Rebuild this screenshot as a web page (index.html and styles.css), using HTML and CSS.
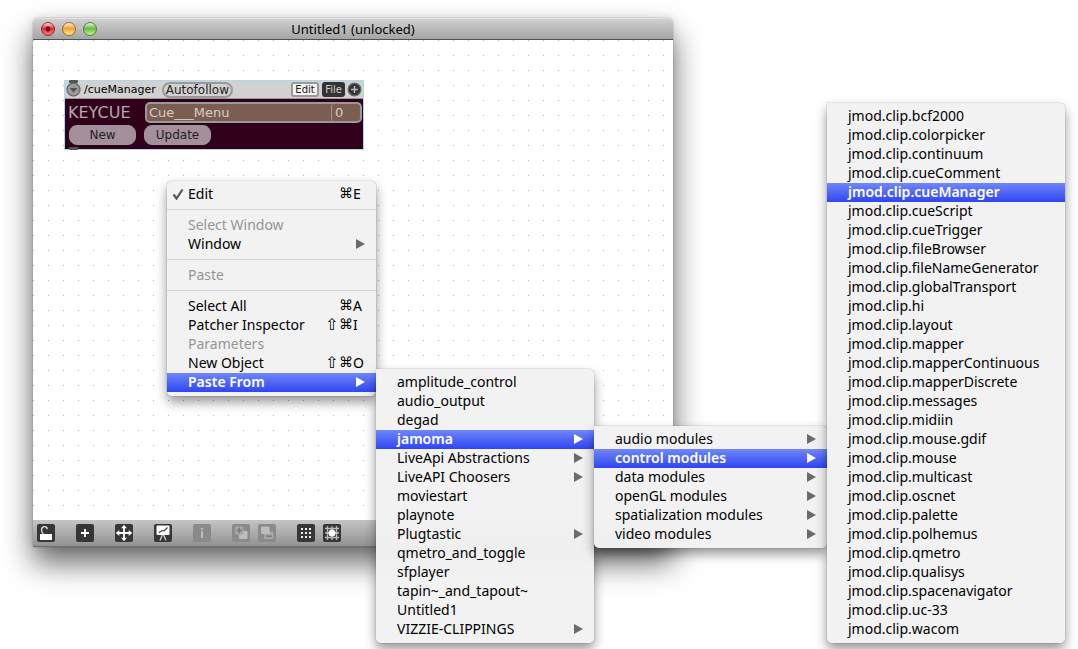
FILE: index.html
```
<!DOCTYPE html>
<html lang="en">
<head>
<meta charset="utf-8">
<title>Untitled1 (unlocked)</title>
<link rel="stylesheet" href="styles.css">
</head>
<body>
<main class="window">
  <header class="titlebar">
    <div class="lights">
      <button class="light red" aria-label="Close"></button>
      <button class="light amber" aria-label="Minimize"></button>
      <button class="light green" aria-label="Zoom"></button>
    </div>
    <h1 class="title">Untitled1 (unlocked)</h1>
  </header>

  <section class="canvas" aria-label="Patcher">
    <div class="module">
      <span class="port top"></span>
      <div class="module-head">
        <button class="round" aria-label="Module menu"><svg viewBox="0 0 15 15"><circle cx="7.500" cy="7.500" r="6.500" fill="#9a9a9a" stroke="#6c6c6c" stroke-width="1.400"/><path d="M3.500 6h8l-4 4.500z" fill="#555"/></svg></button>
        <span class="module-name">/cueManager</span>
        <button class="autofollow">Autofollow</button>
        <button class="tag edit">Edit</button>
        <button class="tag file">File</button>
        <button class="round" aria-label="Add"><svg viewBox="0 0 15 15"><circle cx="7.500" cy="7.500" r="6.300" fill="#333" stroke="#6a6a6a" stroke-width="1.400"/><path d="M7.500 4v7M4 7.500h7" stroke="#b8b8b8" stroke-width="1.500"/></svg></button>
      </div>
      <div class="module-body">
        <span class="keycue">KEYCUE</span>
        <div class="cue">
          <select class="cue-menu" aria-label="Cue menu"><option>Cue___Menu</option></select>
          <input class="cue-number" aria-label="Cue number" value="0">
        </div>
        <div class="actions">
          <button class="pill">New</button>
          <button class="pill">Update</button>
        </div>
      </div>
      <span class="port bottom"></span>
    </div>
  </section>

  <footer class="toolbar">
    <div class="group"><button class="tool" aria-label="Lock"><svg viewBox="0 0 18 18"><path d="M3 10h12v6H3z" fill="#fff"/><path d="M6.500 10C3.500 7.500 4 2.700 7.500 2.700c1.700 0 2.700 1 2.700 2.500" fill="none" stroke="#e4e4e4" stroke-width="1.300"/></svg></button></div>
    <div class="group"><button class="tool" aria-label="New object"><svg viewBox="0 0 18 18"><path d="M9 5v8M5 9h8" stroke="#fff" stroke-width="1.800"/></svg></button></div>
    <div class="group"><button class="tool" aria-label="Move"><svg viewBox="0 0 18 18"><path d="M9 3v12M3 9h12" stroke="#fff" stroke-width="1.800"/><path d="M9 .8l3 3.500H6zM9 17.200l3-3.500H6zM.8 9l3.500-3v6zM17.200 9l-3.500-3v6z" fill="#fff"/></svg></button></div>
    <div class="group"><button class="tool" aria-label="Presentation"><svg viewBox="0 0 18 18"><rect x="2.500" y="1.500" width="13" height="9.500" rx="1" fill="#fff"/><path d="M5 8.500l3-2 2 .5 3.500-3.500" fill="none" stroke="#333" stroke-width="1.100"/><path d="M8.300 11L6 16.500M9.700 11l2.300 5.500" stroke="#ddd" stroke-width="1.200"/></svg></button></div>
    <div class="group"><button class="tool" aria-label="Inspector" disabled><svg viewBox="0 0 18 18"><path d="M8 4h2v2H8zM8 7h2v7H8z" fill="#bcbcbc"/></svg></button></div>
    <div class="group">
      <button class="tool" aria-label="Group" disabled><svg viewBox="0 0 18 18"><rect x="7" y="7" width="8.500" height="8" rx="1" fill="#bdbdbd"/><rect x="3" y="2.500" width="8.500" height="8" rx="1" fill="#a6a6a6"/><path d="M7.300 3.800v5.500M4.500 6.500h5.600" stroke="#777" stroke-width="1.500"/></svg></button>
      <button class="tool" aria-label="Ungroup" disabled><svg viewBox="0 0 18 18"><rect x="6" y="7.500" width="9.500" height="7.500" rx="1" fill="#a6a6a6"/><rect x="3" y="2.500" width="8.500" height="7.500" rx="1" fill="#bdbdbd"/><path d="M8 12.200h6" stroke="#777" stroke-width="1.300"/></svg></button>
    </div>
    <div class="group">
      <button class="tool" aria-label="Grid"><svg viewBox="0 0 18 18"><path d="M4 5h2M8 5h2M12 5h2M4 9h2M8 9h2M12 9h2M4 13h2M8 13h2M12 13h2" stroke="#f0f0f0" stroke-width="2"/></svg></button>
      <button class="tool" aria-label="Snap to grid"><svg viewBox="0 0 18 18"><path d="M4.500 2v14M9 2v14M13.500 2v14M2 4.500h14M2 9h14M2 13.500h14" stroke="#bbb" stroke-width="1.300"/><circle cx="9" cy="9" r="3.500" fill="#fff"/></svg></button>
    </div>
  </footer>
</main>

<ul class="menu context" role="menu">
  <li><button class="item"><svg class="check" viewBox="0 0 12 12"><path d="M1.500 6.500L4.500 10.500 10.500 1.500" fill="none" stroke="#555" stroke-width="2.200"/></svg>Edit<span class="keys"><kbd></kbd><kbd>⌘</kbd><kbd class="letter">E</kbd></span></button></li>
  <li class="rule"></li>
  <li><button class="item" disabled>Select Window</button></li>
  <li><button class="item more">Window</button></li>
  <li class="rule"></li>
  <li><button class="item" disabled>Paste</button></li>
  <li class="rule"></li>
  <li><button class="item">Select All<span class="keys"><kbd></kbd><kbd>⌘</kbd><kbd class="letter">A</kbd></span></button></li>
  <li><button class="item">Patcher Inspector<span class="keys"><kbd class="shift">⇧</kbd><kbd>⌘</kbd><kbd class="letter">I</kbd></span></button></li>
  <li><button class="item" disabled>Parameters</button></li>
  <li><button class="item">New Object<span class="keys"><kbd class="shift">⇧</kbd><kbd>⌘</kbd><kbd class="letter">O</kbd></span></button></li>
  <li><button class="item more active">Paste From</button>
    <ul class="menu sub clippings" role="menu">
      <li><button class="item">amplitude_control</button></li>
      <li><button class="item">audio_output</button></li>
      <li><button class="item">degad</button></li>
      <li><button class="item more active">jamoma</button>
        <ul class="menu sub modules" role="menu">
          <li><button class="item more">audio modules</button></li>
          <li><button class="item more active">control modules</button>
            <ul class="menu sub clips" role="menu">
              <li><button class="item">jmod.clip.bcf2000</button></li>
              <li><button class="item">jmod.clip.colorpicker</button></li>
              <li><button class="item">jmod.clip.continuum</button></li>
              <li><button class="item">jmod.clip.cueComment</button></li>
              <li><button class="item active">jmod.clip.cueManager</button></li>
              <li><button class="item">jmod.clip.cueScript</button></li>
              <li><button class="item">jmod.clip.cueTrigger</button></li>
              <li><button class="item">jmod.clip.fileBrowser</button></li>
              <li><button class="item">jmod.clip.fileNameGenerator</button></li>
              <li><button class="item">jmod.clip.globalTransport</button></li>
              <li><button class="item">jmod.clip.hi</button></li>
              <li><button class="item">jmod.clip.layout</button></li>
              <li><button class="item">jmod.clip.mapper</button></li>
              <li><button class="item">jmod.clip.mapperContinuous</button></li>
              <li><button class="item">jmod.clip.mapperDiscrete</button></li>
              <li><button class="item">jmod.clip.messages</button></li>
              <li><button class="item">jmod.clip.midiin</button></li>
              <li><button class="item">jmod.clip.mouse.gdif</button></li>
              <li><button class="item">jmod.clip.mouse</button></li>
              <li><button class="item">jmod.clip.multicast</button></li>
              <li><button class="item">jmod.clip.oscnet</button></li>
              <li><button class="item">jmod.clip.palette</button></li>
              <li><button class="item">jmod.clip.polhemus</button></li>
              <li><button class="item">jmod.clip.qmetro</button></li>
              <li><button class="item">jmod.clip.qualisys</button></li>
              <li><button class="item">jmod.clip.spacenavigator</button></li>
              <li><button class="item">jmod.clip.uc-33</button></li>
              <li><button class="item">jmod.clip.wacom</button></li>
            </ul>
          </li>
          <li><button class="item more">data modules</button></li>
          <li><button class="item more">openGL modules</button></li>
          <li><button class="item more">spatialization modules</button></li>
          <li><button class="item more">video modules</button></li>
        </ul>
      </li>
      <li><button class="item more">LiveApi Abstractions</button></li>
      <li><button class="item more">LiveAPI Choosers</button></li>
      <li><button class="item">moviestart</button></li>
      <li><button class="item">playnote</button></li>
      <li><button class="item more">Plugtastic</button></li>
      <li><button class="item">qmetro_and_toggle</button></li>
      <li><button class="item">sfplayer</button></li>
      <li><button class="item">tapin~_and_tapout~</button></li>
      <li><button class="item">Untitled1</button></li>
      <li><button class="item more">VIZZIE-CLIPPINGS</button></li>
    </ul>
  </li>
</ul>
</body>
</html>
```
FILE: styles.css
```
* { box-sizing: border-box; }
body {
  margin: 0;
  min-height: 100vh;
  padding: 18px 405px 102px 33px;
  background: #fff;
  font-family: "Noto Sans", sans-serif;
  font-size: 14px;
  color: #000;
  display: flex;
  overflow: hidden;
}
button, input, select { font: inherit; color: inherit; margin: 0; padding: 0; border: 0; background: none; }
svg { display: block; }

.window {
  flex: 1;
  display: flex;
  flex-direction: column;
  border-radius: 5px 5px 0 0;
  box-shadow: 0 0 1px rgba(0,0,0,.7), 0 16px 30px rgba(0,0,0,.6), 0 0 10px rgba(0,0,0,.1);
}
.titlebar {
  display: grid;
  grid-template-columns: 1fr auto 1fr;
  align-items: center;
  height: 22px;
  padding: 0 8px;
  border-radius: 5px 5px 0 0;
  border-top: 1px solid #e2e2e2;
  border-bottom: 1px solid #515151;
  background: linear-gradient(#d0d0d0, #a5a5a5);
}
.title { margin: 0; font-size: 13px; font-weight: 400; line-height: 20px; }
.lights { display: flex; gap: 7px; }
.light { width: 14px; height: 14px; border-radius: 50%; border: 1px solid; }
.red { border-color: #8b2f2f; background: radial-gradient(circle at 50% 50%, #7c0a12 0 2px, transparent 3px), linear-gradient(#fbdada, #e0303c 45%, #ff7878); }
.amber { border-color: #a5652a; background: linear-gradient(#fff0d8, #f0a040 45%, #ffee80); }
.green { border-color: #4d7d38; background: linear-gradient(#e8f8dc, #6cb848 45%, #c4f490); }

.canvas {
  flex: 1;
  padding: 40px 31px;
  background: #fff conic-gradient(from 270deg at 1px 1px, #b4b4b4 90deg, transparent 0) 0 0 / 15px 15px;
}
.module {
  position: relative;
  width: 300px;
  border: 1px solid #a9dbe8;
  background: #31001a;
  font-family: "DejaVu Sans", sans-serif;
}
.port { position: absolute; left: 4px; width: 9px; height: 3px; background: #555; border-radius: 1px; }
.port.top { top: -1px; }
.port.bottom { bottom: -1px; }
.module-head {
  display: flex;
  align-items: center;
  height: 18px;
  padding: 0 1px;
  background: #d1d1d1;
  border-bottom: 1px solid #999;
}
.round { width: 15px; height: 15px; }
.module-name { margin-left: 3px; font-size: 11px; }
.autofollow {
  margin: 0 auto 0 6px;
  height: 16px;
  padding: 0 2px;
  border: 2px solid #999;
  border-radius: 8px;
  font-size: 12px;
  line-height: 12px;
  color: #222;
}
.tag { height: 15px; font-size: 10px; line-height: 11px; border-radius: 3px; }
.edit { width: 28px; border: 2px solid #999; background: #f4f4f4; color: #222; }
.file { width: 23px; margin: 0 2px 0 3px; background: #333; color: #ccc; }
.module-body {
  display: grid;
  grid-template-columns: 76px 1fr;
  row-gap: 2px;
  padding: 3px 1px 4px 3px;
}
.keycue { font-size: 16px; line-height: 21px; color: #b5a8ae; }
.cue {
  display: flex;
  height: 21px;
  margin-left: 1px;
  border: 2px solid #999;
  border-radius: 5px;
  background: #7c5e50;
  color: #d8cdc8;
  font-size: 13px;
}
.cue-menu { flex: 1; appearance: none; padding-left: 2px; }
.cue-number { width: 29px; padding-left: 3px; border-left: 1px solid #999; border-radius: 3px; min-width: 0; }
.actions { grid-column: 1 / -1; display: flex; gap: 8px; padding-left: 1px; }
.pill {
  width: 67px;
  height: 20px;
  border: 1px solid #999;
  border-radius: 8px;
  background: #a58f9b;
  font-size: 12px;
  line-height: 18px;
  color: #222;
}

.toolbar {
  display: flex;
  gap: 21px;
  height: 27px;
  padding: 4px;
  background: linear-gradient(#c4c4c4, #929292);
  border-bottom: 1px solid #707070;
}
.group { display: flex; gap: 8px; }
.tool { width: 18px; height: 18px; border-radius: 2px; background: #363636; }
.tool:disabled { background: #8a8a8a; }

.menu {
  position: absolute;
  margin: 0;
  padding: 4px 0;
  list-style: none;
  background: rgba(242,242,242,.98);
  border-radius: 5px;
  box-shadow: 0 0 1px rgba(0,0,0,.6), 0 6px 12px rgba(0,0,0,.42);
}
.menu li { position: relative; }
.context { left: 167px; top: 181px; width: 209px; }
.sub { left: 100%; top: -4px; border-radius: 0 5px 5px 5px; z-index: 1; }
.clippings { width: 218px; }
.modules { width: 233px; }
.clips { width: 238px; top: auto; bottom: -175px; }
.rule { height: 12px; border-top: 5px solid transparent; }
.rule::after { content: ""; display: block; height: 1px; background: #d6d6d6; }
.item {
  display: flex;
  align-items: center;
  width: 100%;
  height: 19px;
  padding: 0 11px 2px 21px;
  line-height: 17px;
  text-align: left;
  white-space: nowrap;
}
.item:disabled { color: #959595; }
.more::after {
  content: "";
  margin-left: auto;
  border: 5px solid transparent;
  border-left: 9px solid #6b6b6b;
  border-right: 0;
}
.active {
  background: linear-gradient(#7087fb, #2f45f3);
  color: #fff;
  font-weight: 600;
}
.active::after { border-left-color: #fff; }
.check { position: absolute; left: 5px; top: 3px; width: 12px; height: 12px; }
.keys { display: flex; margin-left: auto; }
kbd { width: 14px; font: 14px/17px "DejaVu Sans", sans-serif; }
kbd.shift { font-size: 16px; }
kbd.letter { width: 12px; font-family: "Noto Sans", sans-serif; }
```
